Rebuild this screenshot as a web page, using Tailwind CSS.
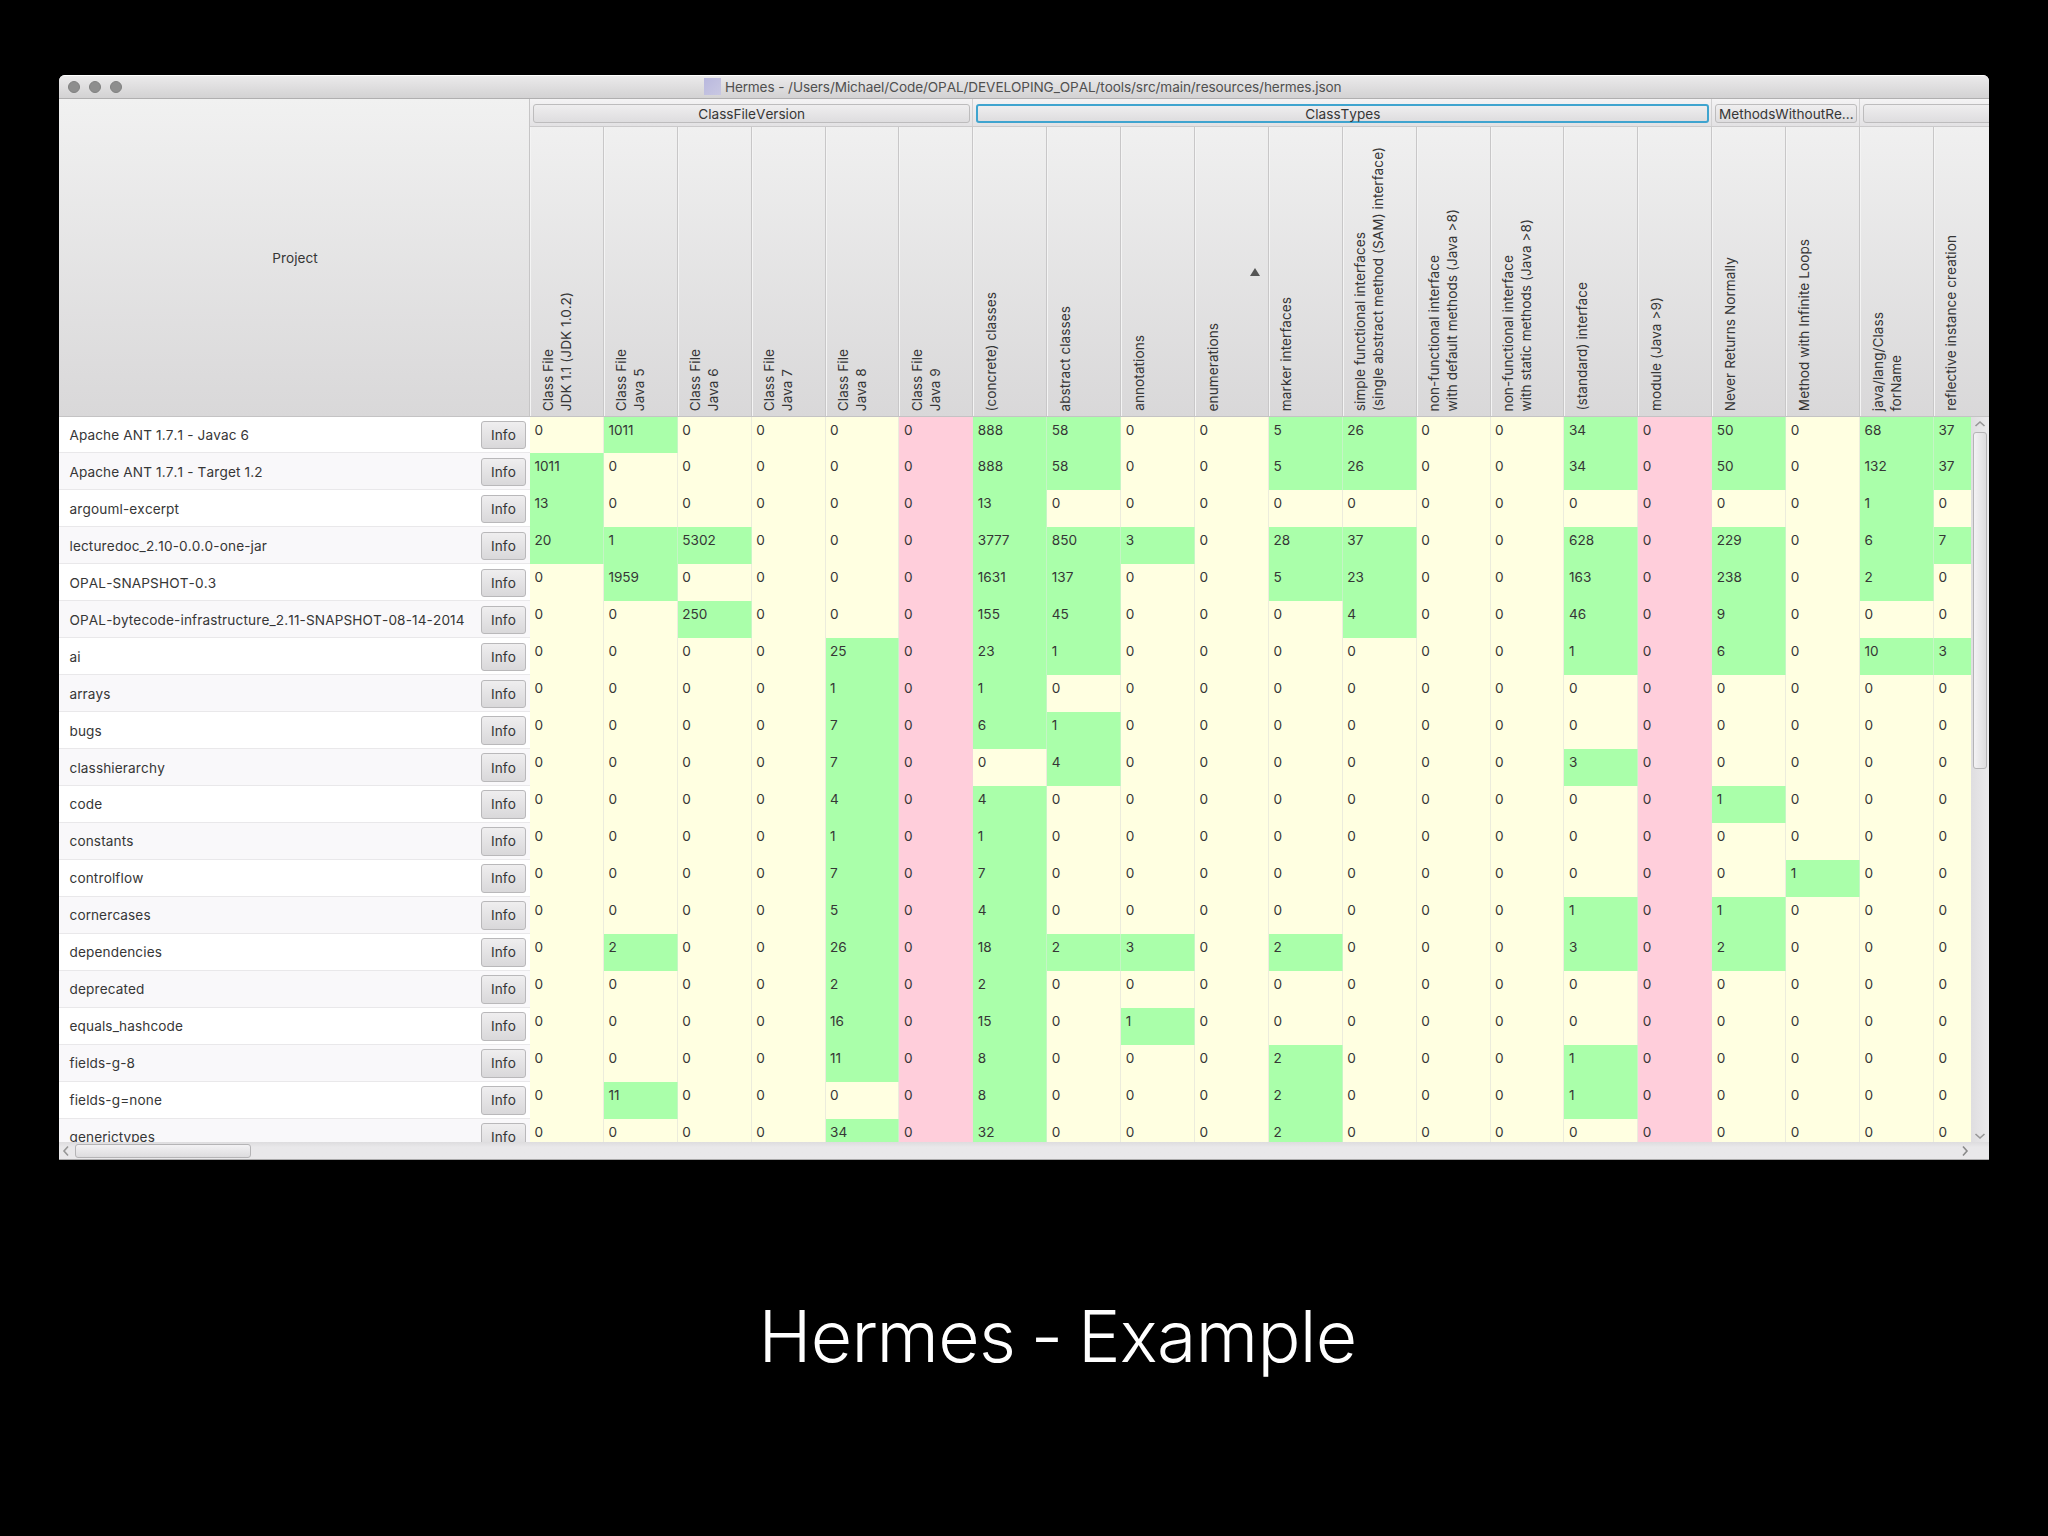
<!DOCTYPE html>
<html lang="en">
<head>
  <meta charset="UTF-8" />
  <title>Hermes - Example</title>
  <meta name="viewport" content="width=device-width, initial-scale=1" />
  <script src="https://cdn.jsdelivr.net/npm/@tailwindcss/browser@4"></script>
</head>
<body class="h-screen overflow-hidden bg-black pl-[59px] pt-[75px] font-['Inter','Liberation_Sans',sans-serif] text-[13.6px] text-[#363636] [font-kerning:none]">
  <div class="flex h-[1084.5px] w-[1929.5px] flex-col overflow-hidden rounded-t-md bg-[#e8e7e9]">

    <!-- Title bar -->
    <div class="flex h-6 shrink-0 items-center border-b border-[#b0afb0] border-t border-t-white bg-linear-to-b from-[#ebeaeb] to-[#d3d2d3] pl-[8.5px]">
      <div class="flex gap-[8.6px]">
        <span class="size-[12.6px] rounded-full border border-[#808080] bg-[#8e8e8e]"></span>
        <span class="size-[12.6px] rounded-full border border-[#808080] bg-[#8e8e8e]"></span>
        <span class="size-[12.6px] rounded-full border border-[#808080] bg-[#8e8e8e]"></span>
      </div>
      <div class="ml-[581.5px] flex items-center gap-1">
        <span class="h-[17px] w-[17px] bg-linear-to-br from-[#b9b8de] to-[#c9c8e2]"></span>
        <span class="whitespace-nowrap tracking-[-0.1px] text-[#505050]">Hermes - /Users/Michael/Code/OPAL/DEVELOPING_OPAL/tools/src/main/resources/hermes.json</span>
      </div>
    </div>

    <!-- Table header -->
    <div class="flex h-[317.5px] shrink-0 border-b border-[#c4c3c4]">
      <div class="flex w-[471px] shrink-0 items-center justify-center border-r border-[#c6c5c6] bg-linear-to-b from-[#f1f1f1] to-[#d9d8d9] pl-[2px] pt-[2px]">Project</div>
      <div class="flex min-w-0 flex-1 flex-col">
        <div id="groups" class="flex h-[27.5px] shrink-0 border-b border-[#cbcacb] bg-linear-to-b from-[#f4f3f4] to-[#e3e2e4]"></div>
        <div id="heads" class="flex min-h-0 flex-1 overflow-hidden bg-linear-to-b from-[#f0f0f0] to-[#d9d8d9]"></div>
      </div>
    </div>

    <!-- Table body -->
    <div class="flex h-[725.5px] shrink-0">
      <div id="rows" class="w-[1912.3px] shrink-0 overflow-hidden bg-white"></div>
      <div class="flex flex-1 flex-col items-center bg-linear-to-r from-[#dfdee0] to-[#ebeaec]">
        <svg class="mt-[3px] h-2 w-3 shrink-0" viewBox="0 0 12 8" fill="none" stroke="#979797" stroke-width="1.6"><path d="M1.5 6L6 2l4.5 4" /></svg>
        <div class="mt-[4px] h-[337px] w-[13.5px] shrink-0 rounded-[3px] border border-[#b5b4b6] bg-linear-to-r from-[#f3f2f4] to-[#dddcde]"></div>
        <svg class="mb-[2px] mt-auto h-2 w-3 shrink-0" viewBox="0 0 12 8" fill="none" stroke="#979797" stroke-width="1.6"><path d="M1.5 2L6 6l4.5-4" /></svg>
      </div>
    </div>

    <!-- Horizontal scrollbar -->
    <div class="flex flex-1 items-center border-b border-[#aaa9aa] bg-linear-to-b from-[#dddcde] to-[#e9e8ea] to-30% pl-[3px] pr-[20px] pt-px">
      <svg class="h-3 w-2" viewBox="0 0 8 12" fill="none" stroke="#979797" stroke-width="1.6"><path d="M6 1.5L2 6l4 4.5" /></svg>
      <div class="ml-[5px] h-[14px] w-[176px] rounded-[3px] border border-[#b5b4b6] bg-linear-to-b from-[#f3f2f4] to-[#dddcde]"></div>
      <svg class="ml-auto h-3 w-2" viewBox="0 0 8 12" fill="none" stroke="#8a8a8a" stroke-width="1.6"><path d="M2 1.5L6 6l-4 4.5" /></svg>
    </div>
  </div>

  <h1 class="mt-[123px] w-[1997px] text-center text-[71.5px] font-light tracking-[-0.7px] text-white [word-spacing:-3.8px]">Hermes - Example</h1>

  <script>
    const groups = [["ClassFileVersion", 6], ["ClassTypes", 10], ["MethodsWithoutRe...", 2], ["", 4]];

    const heads = [
      "Class File\nJDK 1.1 (JDK 1.0.2)", "Class File\nJava 5", "Class File\nJava 6", "Class File\nJava 7",
      "Class File\nJava 8", "Class File\nJava 9", "(concrete) classes", "abstract classes", "annotations",
      "enumerations", "marker interfaces",
      "simple functional interfaces\n(single abstract method (SAM) interface)",
      "non-functional interface\nwith default methods (Java >8)",
      "non-functional interface\nwith static methods (Java >8)",
      "(standard) interface", "module (Java >9)", "Never Returns Normally", "Method with Infinite Loops",
      "java/lang/Class\nforName", "reflective instance creation"
    ];

    const rows = [
      ["Apache ANT 1.7.1 - Javac 6", "0 1011 0 0 0 0 888 58 0 0 5 26 0 0 34 0 50 0 68 37"],
      ["Apache ANT 1.7.1 - Target 1.2", "1011 0 0 0 0 0 888 58 0 0 5 26 0 0 34 0 50 0 132 37"],
      ["argouml-excerpt", "13 0 0 0 0 0 13 0 0 0 0 0 0 0 0 0 0 0 1 0"],
      ["lecturedoc_2.10-0.0.0-one-jar", "20 1 5302 0 0 0 3777 850 3 0 28 37 0 0 628 0 229 0 6 7"],
      ["OPAL-SNAPSHOT-0.3", "0 1959 0 0 0 0 1631 137 0 0 5 23 0 0 163 0 238 0 2 0"],
      ["OPAL-bytecode-infrastructure_2.11-SNAPSHOT-08-14-2014", "0 0 250 0 0 0 155 45 0 0 0 4 0 0 46 0 9 0 0 0"],
      ["ai", "0 0 0 0 25 0 23 1 0 0 0 0 0 0 1 0 6 0 10 3"],
      ["arrays", "0 0 0 0 1 0 1 0 0 0 0 0 0 0 0 0 0 0 0 0"],
      ["bugs", "0 0 0 0 7 0 6 1 0 0 0 0 0 0 0 0 0 0 0 0"],
      ["classhierarchy", "0 0 0 0 7 0 0 4 0 0 0 0 0 0 3 0 0 0 0 0"],
      ["code", "0 0 0 0 4 0 4 0 0 0 0 0 0 0 0 0 1 0 0 0"],
      ["constants", "0 0 0 0 1 0 1 0 0 0 0 0 0 0 0 0 0 0 0 0"],
      ["controlflow", "0 0 0 0 7 0 7 0 0 0 0 0 0 0 0 0 0 1 0 0"],
      ["cornercases", "0 0 0 0 5 0 4 0 0 0 0 0 0 0 1 0 1 0 0 0"],
      ["dependencies", "0 2 0 0 26 0 18 2 3 0 2 0 0 0 3 0 2 0 0 0"],
      ["deprecated", "0 0 0 0 2 0 2 0 0 0 0 0 0 0 0 0 0 0 0 0"],
      ["equals_hashcode", "0 0 0 0 16 0 15 0 1 0 0 0 0 0 0 0 0 0 0 0"],
      ["fields-g-8", "0 0 0 0 11 0 8 0 0 0 2 0 0 0 1 0 0 0 0 0"],
      ["fields-g=none", "0 11 0 0 0 0 8 0 0 0 2 0 0 0 1 0 0 0 0 0"],
      ["generictypes", "0 0 0 0 34 0 32 0 0 0 2 0 0 0 0 0 0 0 0 0"]
    ];

    // Column groups, the second one has the focus ring
    document.getElementById("groups").innerHTML = groups.map(([name, span], i) => `
      <div class="shrink-0 border-r border-[#d2d1d2] pl-[3px] pr-[2px] pt-[5px]" style="width:${span * 73.9}px">
        <div class="flex h-[19px] items-center justify-center whitespace-nowrap rounded-[3px] bg-linear-to-b from-[#efeeef] to-[#dedddf] pt-px ${i === 1 ? "border-2 border-[#3fa4cf]" : "border border-[#bdbcbd]"}">${name}</div>
      </div>`).join("");

    // Rotated column titles
    document.getElementById("heads").innerHTML = heads.map((text, i) => `
      <div class="relative flex w-[73.9px] shrink-0 items-end border-r border-[#c8c7c8] pb-[4.5px] pl-[9.5px] shadow-[inset_1px_0_0_#f4f4f4]">
        <span class="rotate-180 whitespace-pre leading-[17.8px] tracking-[0.06px] [writing-mode:vertical-rl]">${text.split("\n").join("<br>")}</span>
        ${i === 9 ? '<svg class="absolute right-[8px] top-[141px] h-[8px] w-[10px]" viewBox="0 0 10 8"><path d="M5 0l5 8H0z" fill="#555" /></svg>' : ""}
      </div>`).join("");

    // Project rows
    document.getElementById("rows").innerHTML = rows.map(([name, values], r) => `
      <div class="flex h-[36.97px]">
        <div class="flex w-[471px] shrink-0 items-center border-b border-[#e9e8ea] pl-[10.5px] pr-[4px] pt-px ${r % 2 ? "bg-[#f9f8fa]" : "bg-white"}">
          <span class="whitespace-nowrap tracking-[0.13px]">${name}</span>
          <span class="ml-auto flex h-[28.5px] w-[45px] items-center justify-center rounded-[3px] border border-[#b9b8ba] bg-linear-to-b from-[#efeeef] to-[#d9d8da]">Info</span>
        </div>
        ${values.split(" ").map((v, c) => `<div class="w-[73.9px] shrink-0 border-r pl-[4.5px] pt-[4px] leading-[18px] ${c === 5 || c === 15 ? "border-[#f6d3dc] bg-[#ffcedb]" : v === "0" ? "border-[#ececdc] bg-[#ffffe1]" : "border-[#c5f5c5] bg-[#aaffaa]"}">${v}</div>`).join("")}
      </div>`).join("");
  </script>
</body>
</html>
